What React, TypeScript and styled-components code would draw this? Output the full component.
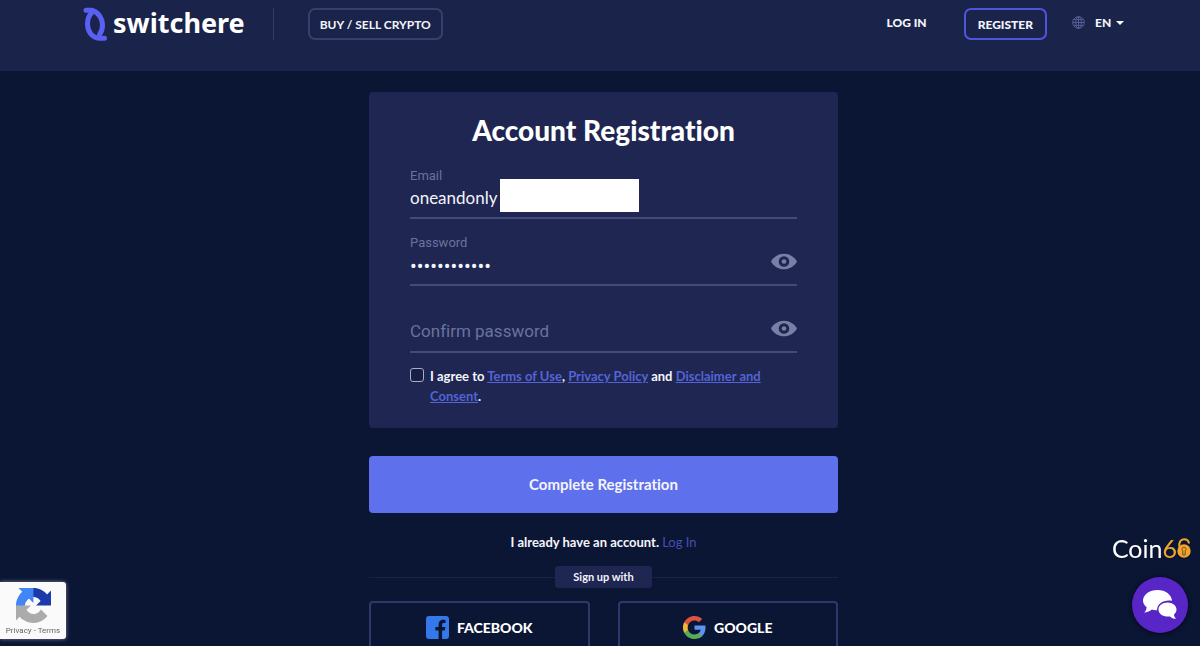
import React, { useState } from "react";
import styled, { createGlobalStyle } from "styled-components";

const sans = `Lato, "Open Sans", sans-serif`;
const roboto = `Roboto, "Liberation Sans", sans-serif`;

const GlobalStyle = createGlobalStyle`
  *, *::before, *::after { box-sizing: border-box; }
  html { scrollbar-width: none; background: #0b1534; }
  body { margin: 0; font-family: ${sans}; font-variant-ligatures: none; color: #f4f5fb; }
  button, input, select { font: inherit; font-variant-ligatures: none; color: inherit; }
  a { color: inherit; text-decoration: none; }
`;

const Header = styled.header`
  background: #1a244a;
  padding: 8px 76px 31px 83px;
`;

const Nav = styled.nav`
  display: flex;
  align-items: center;
  height: 32px;
`;

const Brand = styled.a`
  display: flex;
  align-items: center;
  gap: 5px;
  color: #fff;
  font: 700 27px/32px "Noto Sans", "Open Sans", sans-serif;
`;

const BrandName = styled.span`
  padding-bottom: 3px;
`;

const Divider = styled.span`
  width: 1px;
  height: 32px;
  margin: 0 34px 0 28px;
  background: #323d70;
`;

const NavButton = styled.button<{ $accent?: boolean }>`
  height: 32px;
  padding: 0 ${(p) => (p.$accent ? 12 : 10)}px;
  border: 2px solid ${(p) => (p.$accent ? "#4f54dc" : "#36406e")};
  border-radius: 7px;
  background: transparent;
  font-size: 12px;
  font-weight: ${(p) => (p.$accent ? 900 : 700)};
  cursor: pointer;
`;

const NavEnd = styled.div`
  display: flex;
  align-items: center;
  margin-left: auto;
`;

const NavLink = styled.a`
  margin-right: 37px;
  padding-bottom: 2px;
  font-size: 12px;
  line-height: 16px;
  font-weight: 900;
`;

const Language = styled.label`
  display: flex;
  align-items: center;
  gap: 4px;
  margin-left: 25px;
  padding-bottom: 3px;
`;

const LanguageSelect = styled.select`
  appearance: none;
  width: 17px;
  margin-left: 6px;
  padding: 0;
  border: 0;
  background: transparent;
  font-size: 12px;
  font-weight: 900;
`;

const Page = styled.div`
  padding-left: 7px;
`;

const Main = styled.main`
  width: 469px;
  max-width: 100%;
  margin: 0 auto;
  padding: 21px 0 20px;
`;

const Card = styled.section`
  padding: 22px 41px;
  border-radius: 4px;
  background: #1e2651;
`;

const Title = styled.h1`
  margin: 0 0 21px;
  text-align: center;
  font-size: 28px;
  line-height: 32px;
  font-weight: 900;
  color: #fff;
`;

const Fields = styled.div`
  display: grid;
  gap: 15px;
`;

const Field = styled.div`
  border-bottom: 2px solid #434b7a;
`;

const FieldLabel = styled.label<{ $quiet?: boolean }>`
  display: block;
  font: 400 13px/18px ${roboto};
  color: #6a739f;
  opacity: ${(p) => (p.$quiet ? 0 : 1)};
`;

const FieldRow = styled.div`
  position: relative;
  display: flex;
  height: 32px;
`;

const TextInput = styled.input`
  flex: 1;
  min-width: 0;
  padding: 0 0 8px;
  border: 0;
  outline: 0;
  background: transparent;
  font-size: 17px;
  &[type="password"] { font-family: ${roboto}; }
  &[type="password"]:not(:placeholder-shown) { padding-bottom: 4px; font-size: 20px; }
  &::placeholder { color: #6a739f; opacity: 1; }
`;

const Mask = styled.span`
  position: absolute;
  left: 90px;
  top: -6px;
  width: 139px;
  height: 33px;
  background: #fff;
`;

const EyeButton = styled.button`
  display: flex;
  align-items: flex-start;
  padding: 1px 0 0;
  border: 0;
  background: transparent;
  color: #7980a5;
  cursor: pointer;
`;

const Agreement = styled.div`
  display: flex;
  gap: 6px;
  margin-top: 13px;
  font-size: 13px;
  line-height: 20px;
  font-weight: 700;
`;

const AgreementText = styled.p`
  margin: 0;
`;

const Checkbox = styled.input`
  appearance: none;
  flex: none;
  width: 14px;
  height: 14px;
  margin: 2px 0 0;
  border: 1px solid #a9aec6;
  border-radius: 3px;
  background: #171e48;
  &:checked { background: #5f70ec; }
`;

const Terms = styled.a`
  color: #5563d6;
  text-decoration: underline;
`;

const Submit = styled.button`
  display: block;
  width: 100%;
  height: 57px;
  margin-top: 28px;
  padding: 0 0 2px;
  border: 0;
  border-radius: 4px;
  background: #5f70ec;
  font-size: 15px;
  font-weight: 700;
  cursor: pointer;
`;

const Existing = styled.p`
  margin: 20px 0 15px;
  text-align: center;
  font-size: 13px;
  line-height: 18px;
  font-weight: 700;
  a { color: #474fb4; font-weight: 400; }
`;

const Separator = styled.div`
  display: flex;
  align-items: center;
  &::before, &::after {
    content: "";
    flex: 1;
    height: 1px;
    background: #192145;
  }
`;

const Pill = styled.span`
  width: 97px;
  border-radius: 3px;
  background: #1e2651;
  text-align: center;
  font-size: 11px;
  line-height: 22px;
  font-weight: 700;
`;

const SocialRow = styled.div`
  display: grid;
  grid-template-columns: 1fr 1fr;
  gap: 28px;
  margin-top: 13px;
`;

const SocialButton = styled.button`
  display: flex;
  align-items: center;
  justify-content: center;
  gap: 8px;
  height: 54px;
  padding: 0 0 2px;
  border: 2px solid #30386a;
  border-radius: 4px;
  background: transparent;
  color: #fff;
  font-size: 14px;
  font-weight: 900;
  cursor: pointer;
`;

const CaptchaBadge = styled.aside`
  position: fixed;
  left: 0;
  bottom: 7px;
  display: flex;
  flex-direction: column;
  align-items: center;
  gap: 3px;
  width: 66px;
  height: 57px;
  padding-top: 6px;
  border-radius: 0 3px 3px 0;
  background: #fafafa;
  box-shadow: 0 0 4px #7d8296;
  color: #666;
  font: 400 8px/10px ${roboto};
`;

const Corner = styled.aside`
  position: fixed;
  right: 9px;
  bottom: 13px;
  display: flex;
  flex-direction: column;
  align-items: flex-end;
  gap: 15px;
`;

const Watermark = styled.div`
  display: flex;
  align-items: center;
  color: #fff;
  font-size: 25px;
  line-height: 28px;
  font-weight: 400;
`;

const Gold = styled.span`
  color: #f0a62c;
`;

const ChatButton = styled.button`
  display: grid;
  place-items: center;
  width: 56px;
  height: 56px;
  margin-right: 3px;
  padding: 0;
  border: 0;
  border-radius: 50%;
  background: #5825c7;
  box-shadow: 0 1px 4px #050a1c;
  cursor: pointer;
`;

const BrandMark = () => (
  <svg width="25" height="34" viewBox="0 0 25 34" fill="none" stroke="#5a60f3" strokeWidth="5" strokeLinecap="round">
    <path d="M3 3.2h5.5C16 5 19.500 12 19.500 18c0 4-1 7-3 9.500" />
    <path d="M8.500 6C5 9.500 4.500 13 4.500 17c0 7 4 13.500 12 14.300h5" />
  </svg>
);

const Globe = () => (
  <svg width="13" height="13" viewBox="0 0 13 13" fill="none" stroke="#555e94">
    <circle cx="6.500" cy="6.500" r="5.800" />
    <ellipse cx="6.500" cy="6.500" rx="2.800" ry="5.800" />
    <path d="M6.500 .7v11.600M.7 6.500h11.600M1.500 3.600h10M1.500 9.400h10" />
  </svg>
);

const Caret = () => (
  <svg width="8" height="4" viewBox="0 0 8 4" fill="#fff">
    <path d="M0 0h8L4 4z" />
  </svg>
);

const Eye = () => (
  <svg width="26" height="17" viewBox="0 0 26 17" fill="currentColor" fillRule="evenodd">
    <path d="M0 8.500C2.500 3.800 7.500.7 13 .7s10.500 3.100 13 7.800c-2.500 4.700-7.500 7.800-13 7.800S2.500 13.200 0 8.500zM13 3.200a5.300 5.300 0 1 0 0 10.600 5.300 5.300 0 0 0 0-10.600z" />
    <circle cx="13" cy="8.500" r="2.300" />
  </svg>
);

const FacebookLogo = () => (
  <svg width="23" height="23" viewBox="0 0 23 23">
    <rect width="23" height="23" rx="3" fill="#3578ea" />
    <path d="M12.600 23v-8.600H9.400v-3.500h3.200V8.300c0-2.900 1.800-4.500 4.500-4.500.9 0 1.700.1 2.400.2v3.100h-1.700c-1.300 0-1.700.7-1.700 1.600v2.200h3.300l-.5 3.500h-2.800V23z" fill="#0b1534" />
  </svg>
);

const GoogleLogo = () => (
  <svg width="23" height="23" viewBox="0 0 48 48">
    <path fill="#5c93f0" d="M47 24.500c0-1.600-.1-3.200-.4-4.700H24v9h12.900c-.6 3-2.300 5.500-4.800 7.200v6h7.700c4.600-4.200 7.200-10.400 7.200-17.500z" />
    <path fill="#57ad55" d="M24 48c6.500 0 11.900-2.100 15.900-5.800l-7.800-6c-2.100 1.400-4.900 2.300-8.100 2.300-6.300 0-11.600-4.200-13.500-9.900h-8v6.200C6.500 42.600 14.600 48 24 48z" />
    <path fill="#f1b53c" d="M10.500 28.600a14.400 14.400 0 0 1 0-9.200v-6.200h-8a24 24 0 0 0 0 21.600z" />
    <path fill="#dc5340" d="M24 9.500c3.500 0 6.700 1.200 9.200 3.600l6.900-6.900C35.900 2.400 30.500 0 24 0 14.600 0 6.500 5.400 2.500 13.200l8 6.200C12.400 13.700 17.700 9.500 24 9.500z" />
  </svg>
);

const CaptchaLogo = () => (
  <svg width="35" height="35" viewBox="0 0 64 64">
    <path fill="#1c3aa9" d="M64 31.955l-.033-1.370V4.687l-7.160 7.160C50.948 4.674 42.033.093 32.050.093c-10.400 0-19.622 4.960-25.458 12.640l11.736 11.860a15.550 15.550 0 0 1 4.754-5.334c2.050-1.600 4.952-2.906 8.968-2.906.485 0 .86.057 1.135.163 4.976.393 9.288 3.140 11.828 7.124l-8.307 8.307L64 31.953" />
    <path fill="#4285f4" d="M31.862.094l-1.370.033H4.594l7.160 7.160C4.580 13.147 0 22.060 0 32.046c0 10.400 4.960 19.622 12.640 25.458L24.500 45.768a15.550 15.550 0 0 1-5.334-4.754c-1.600-2.050-2.906-4.952-2.906-8.968 0-.485.057-.86.163-1.135.393-4.976 3.140-9.288 7.124-11.828l8.307 8.307L31.860.095" />
    <path fill="#ababab" d="M.001 32.045l.033 1.370v25.898l7.160-7.160c5.860 7.173 14.774 11.754 24.760 11.754 10.400 0 19.622-4.960 25.458-12.640l-11.736-11.860a15.550 15.550 0 0 1-4.754 5.334c-2.050 1.600-4.952 2.906-8.968 2.906-.485 0-.86-.057-1.135-.163-4.976-.393-9.288-3.140-11.828-7.124l8.307-8.307c-10.522.04-22.400.066-27.295-.005" />
  </svg>
);

const LockEight = () => (
  <svg width="14" height="20" viewBox="0 0 14 20" fill="none">
    <path d="M2.500 9C1.500 4.500 3.500 1.200 7 1.200c2.700 0 4.700 1.800 5 4.300" stroke="#f0a62c" strokeWidth="2" />
    <circle cx="7" cy="13" r="6.700" fill="#f0a62c" />
    <path d="M5.800 17v-4.200a2 2 0 1 1 2.400 0V17z" stroke="#7b4a1c" />
  </svg>
);

const ChatIcon = () => (
  <svg width="34" height="30" viewBox="0 0 34 30" fill="#fff">
    <path d="M14.500 0C22.500 0 28.600 4.600 29 10.700c-8-1.500-15 2.600-15 9.500-2 .1-3.600-.1-5.300-.6C7 21.300 4.500 22.500 1.200 22.500c1.500-1.300 2.300-3 2.400-5.200C1.400 15.500 0 13.300 0 10.500 0 4.700 6.500 0 14.500 0z" />
    <path d="M24.500 12.500c5 0 9 3 9 7 0 2-1 3.700-2.500 5 .1 1.700.8 3 2 4.300-2.400 0-4.500-.9-6-2.400-6 .9-11.500-2-11.500-6.900 0-4 4-7 9-7z" />
  </svg>
);

function PasswordField({ id, label, initial = "" }: { id: string; label: string; initial?: string }) {
  const [shown, setShown] = useState(false);
  const [value, setValue] = useState(initial);
  return (
    <Field>
      <FieldLabel htmlFor={id} $quiet={!value}>{label}</FieldLabel>
      <FieldRow>
        <TextInput
          id={id}
          type={shown ? "text" : "password"}
          placeholder={label}
          value={value}
          onChange={(e) => setValue(e.target.value)}
        />
        <EyeButton type="button" aria-label={`Show ${label.toLowerCase()}`} onClick={() => setShown(!shown)}>
          <Eye />
        </EyeButton>
      </FieldRow>
    </Field>
  );
}

export default function App() {
  return (
    <>
      <GlobalStyle />
      <Header>
        <Nav>
          <Brand href="#">
            <BrandMark />
            <BrandName>switchere</BrandName>
          </Brand>
          <Divider />
          <NavButton type="button">BUY / SELL CRYPTO</NavButton>
          <NavEnd>
            <NavLink href="#login">LOG IN</NavLink>
            <NavButton type="button" $accent>REGISTER</NavButton>
            <Language>
              <Globe />
              <LanguageSelect aria-label="Language">
                <option>EN</option>
              </LanguageSelect>
              <Caret />
            </Language>
          </NavEnd>
        </Nav>
      </Header>
      <Page>
        <Main>
          <Card>
            <Title>Account Registration</Title>
            <Fields>
              <Field>
                <FieldLabel htmlFor="email">Email</FieldLabel>
                <FieldRow>
                  <TextInput id="email" type="text" defaultValue="oneandonly" />
                  <Mask />
                </FieldRow>
              </Field>
              <PasswordField id="password" label="Password" initial="oneandonly12" />
              <PasswordField id="confirm" label="Confirm password" />
            </Fields>
            <Agreement>
              <Checkbox id="agree" type="checkbox" />
              <AgreementText>
                <label htmlFor="agree">I agree to</label> <Terms href="#terms">Terms of Use</Terms>,{" "}
                <Terms href="#privacy">Privacy Policy</Terms> and{" "}
                <Terms href="#disclaimer">Disclaimer and Consent</Terms>.
              </AgreementText>
            </Agreement>
          </Card>
          <Submit type="submit">Complete Registration</Submit>
          <Existing>
            I already have an account. <a href="#login">Log In</a>
          </Existing>
          <Separator>
            <Pill>Sign up with</Pill>
          </Separator>
          <SocialRow>
            <SocialButton type="button"><FacebookLogo />FACEBOOK</SocialButton>
            <SocialButton type="button"><GoogleLogo />GOOGLE</SocialButton>
          </SocialRow>
        </Main>
      </Page>
      <CaptchaBadge>
        <CaptchaLogo />
        <span>Privacy - Terms</span>
      </CaptchaBadge>
      <Corner>
        <Watermark>
          Coin<Gold>6</Gold><LockEight />
        </Watermark>
        <ChatButton type="button" aria-label="Open chat">
          <ChatIcon />
        </ChatButton>
      </Corner>
    </>
  );
}
